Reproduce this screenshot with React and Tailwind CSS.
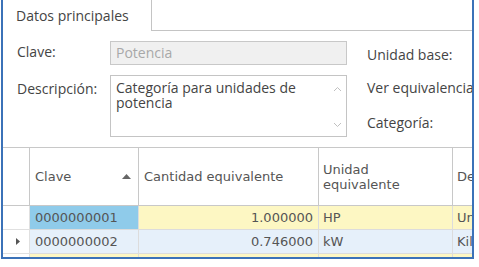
import React from "react";

const formFont = { fontFamily: '"Open Sans", "Noto Sans", sans-serif' };
const gridFont = { fontFamily: '"DejaVu Sans", Verdana, sans-serif' };

function Field({ label, children, className = "", labelClass = "" }) {
  return (
    <div className={`flex items-start ${className}`}>
      <span className={`w-[93px] shrink-0 text-[14px] text-[#444] ${labelClass}`}>{label}</span>
      {children}
    </div>
  );
}

export default function App() {
  const rows = [
    { clave: "0000000001", cant: "1.000000", unidad: "HP", de: "Unidad", selected: true },
    { clave: "0000000002", cant: "0.746000", unidad: "kW", de: "Kilowatt", current: true },
  ];

  return (
    <div className="w-[479px] h-[267px] bg-white overflow-hidden">
      <div className="ml-[1px] w-[473px] h-[259px] border-x-2 border-b-2 border-[#3b72b8] flex flex-col overflow-hidden">
        {/* tabs */}
        <div className="flex h-[31px] shrink-0" style={formFont}>
          <div className="w-[149px] border-r border-[#c4c4c4] pl-[13px] pt-[5px] text-[14px] text-[#444]">
            Datos principales
          </div>
          <div className="flex-1 border-b border-[#c4c4c4]" />
        </div>

        {/* form */}
        <div className="flex pl-[14px] pt-[10px] h-[116px] shrink-0" style={formFont}>
          <div className="flex flex-col w-[330px]">
            <Field label="Clave:" className="h-[34px] items-center pb-[10px]">
              <div className="w-[237px] h-[24px] border border-[#c8c8c8] bg-[#f0f0f0] px-[5px] text-[14px] leading-[22px] text-[#a8a8a8]">
                Potencia
              </div>
            </Field>
            <Field label="Descripción:" labelClass="pt-[3px]">
              <div className="w-[237px] h-[62px] border border-[#c4c4c4] bg-white flex">
                <div className="flex-1 px-[5px] pt-[4px] text-[14px] leading-[15px] text-[#444]">
                  Categoría para unidades de potencia
                </div>
                <div className="w-[17px] flex flex-col items-center justify-between pt-[10px] pb-[8px] text-[#c0c0c0]">
                  <svg width="9" height="6" viewBox="0 0 9 6"><path d="M1 5 L4.5 1.5 L8 5" fill="none" stroke="currentColor" strokeWidth="1" /></svg>
                  <svg width="9" height="6" viewBox="0 0 9 6"><path d="M1 1 L4.5 4.5 L8 1" fill="none" stroke="currentColor" strokeWidth="1" /></svg>
                </div>
              </div>
            </Field>
          </div>
          <div className="flex flex-col pl-[20px] text-[14px] text-[#444] whitespace-nowrap">
            <div className="h-[34px] pt-[3px]">Unidad base:</div>
            <div className="h-[37px] pt-[2px]">Ver equivalencias</div>
            <div>Categoría:</div>
          </div>
        </div>

        {/* grid */}
        <div
          className="grid grid-cols-[27px_109px_180px_134px_120px] border-t border-[#c8c8c8] text-[13px] text-[#555]"
          style={gridFont}
        >
          <div className="h-[58px] border-r border-b border-[#c8c8c8]" />
          <div className="h-[58px] border-r border-b border-[#c8c8c8] flex items-center justify-between pl-[5px] pr-[7px]">
            <span>Clave</span>
            <svg width="9" height="5" viewBox="0 0 9 5"><path d="M0 5 L4.5 0 L9 5 Z" fill="#666" /></svg>
          </div>
          <div className="h-[58px] border-r border-b border-[#c8c8c8] flex items-center pl-[5px]">
            Cantidad equivalente
          </div>
          <div className="h-[58px] border-r border-b border-[#c8c8c8] flex items-center pl-[4px] leading-[15px]">
            Unidad
            <br />
            equivalente
          </div>
          <div className="h-[58px] border-b border-[#c8c8c8] flex items-center pl-[4px]">Descripción</div>

          {rows.map((r) => (
            <React.Fragment key={r.clave}>
              <div className="h-[24px] border-r border-b border-[#e0e0e0] flex items-center pl-[13px]">
                {r.current && (
                  <svg width="4" height="7" viewBox="0 0 4 7"><path d="M0 0 L4 3.5 L0 7 Z" fill="#555" /></svg>
                )}
              </div>
              <div
                className={`h-[24px] border-r border-b border-[#dcdcdc] flex items-center pl-[5px] ${
                  r.selected ? "bg-[#8fcbea]" : "bg-[#e6f0fa]"
                }`}
              >
                {r.clave}
              </div>
              <div
                className={`h-[24px] border-r border-b border-[#dcdcdc] flex items-center justify-end pr-[5px] ${
                  r.selected ? "bg-[#fdf7c3]" : "bg-[#e6f0fa]"
                }`}
              >
                {r.cant}
              </div>
              <div
                className={`h-[24px] border-r border-b border-[#dcdcdc] flex items-center pl-[4px] ${
                  r.selected ? "bg-[#fdf7c3]" : "bg-[#e6f0fa]"
                }`}
              >
                {r.unidad}
              </div>
              <div
                className={`h-[24px] border-b border-[#dcdcdc] flex items-center pl-[4px] whitespace-nowrap ${
                  r.selected ? "bg-[#fdf7c3]" : "bg-[#e6f0fa]"
                }`}
              >
                {r.de}
              </div>
            </React.Fragment>
          ))}
          <div className="h-[24px] border-r border-[#e0e0e0]" />
          <div className="h-[24px] border-r border-[#dcdcdc] bg-[#fdf7c3]" />
          <div className="h-[24px] border-r border-[#dcdcdc] bg-[#fdf7c3]" />
          <div className="h-[24px] border-r border-[#dcdcdc] bg-[#fdf7c3]" />
          <div className="h-[24px] bg-[#fdf7c3]" />
        </div>
      </div>
    </div>
  );
}
